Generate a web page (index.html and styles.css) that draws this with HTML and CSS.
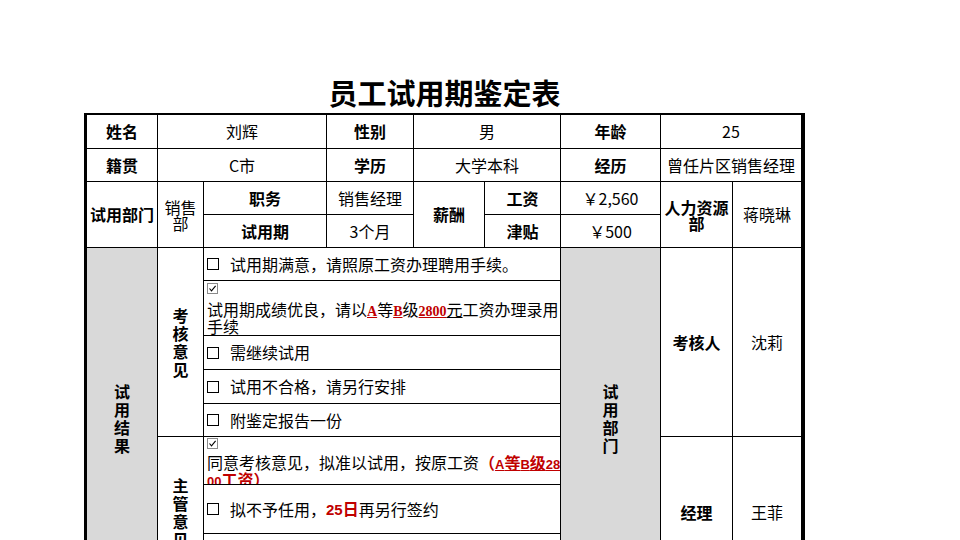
FILE: index.html
```html
<!DOCTYPE html>
<html lang="zh-CN">
<head>
<meta charset="utf-8">
<title>员工试用期鉴定表</title>
<link rel="stylesheet" href="styles.css">
</head>
<body>
<div class="sheet">
  <h1 class="title">员工试用期鉴定表</h1>
  <div class="grid">
    <div class="cell b">姓名</div>
    <div class="cell c2">刘辉</div>
    <div class="cell b">性别</div>
    <div class="cell c2">男</div>
    <div class="cell b">年龄</div>
    <div class="cell c2">25</div>

    <div class="cell b">籍贯</div>
    <div class="cell c2">C市</div>
    <div class="cell b">学历</div>
    <div class="cell c2">大学本科</div>
    <div class="cell b">经历</div>
    <div class="cell c2">曾任片区销售经理</div>

    <div class="cell b r2">试用部门</div>
    <div class="cell r2 narrow">销售部</div>
    <div class="cell b">职务</div>
    <div class="cell">销售经理</div>
    <div class="cell b r2">薪酬</div>
    <div class="cell b">工资</div>
    <div class="cell">￥2,560</div>
    <div class="cell b r2 tight">人力资源部</div>
    <div class="cell r2">蒋晓琳</div>

    <div class="cell b">试用期</div>
    <div class="cell">3个月</div>
    <div class="cell b">津贴</div>
    <div class="cell">￥500</div>

    <div class="cell b gray r8"><span class="vert">试用结果</span></div>
    <div class="cell b r5"><span class="vert">考核意见</span></div>
    <div class="cell opt c4"><span class="box"></span>试用期满意，请照原工资办理聘用手续。</div>
    <div class="cell b gray r8"><span class="vert">试用部门</span></div>
    <div class="cell b r5">考核人</div>
    <div class="cell r5">沈莉</div>

    <div class="cell opt multi first c4">
      <svg class="chk" width="11" height="11" viewBox="0 0 11 11"><rect x="0.5" y="0.5" width="10" height="10" fill="#fff" stroke="#8a8a8a"/><path d="M2.5 5.5 L4.5 7.8 L8.6 2.8" fill="none" stroke="#000" stroke-width="1.1"/></svg>
      <span class="line">试用期成绩优良，请以<span class="hl">A</span>等<span class="hl">B</span>级<span class="hl">2800</span><span class="ul">元</span>工资办理录用</span>
      <span class="line">手续</span>
    </div>
    <div class="cell opt c4"><span class="box"></span>需继续试用</div>
    <div class="cell opt c4"><span class="box"></span>试用不合格，请另行安排</div>
    <div class="cell opt c4"><span class="box"></span>附鉴定报告一份</div>

    <div class="cell b r3"><span class="vert">主管意见</span></div>
    <div class="cell opt multi second c4">
      <svg class="chk" width="11" height="11" viewBox="0 0 11 11"><rect x="0.5" y="0.5" width="10" height="10" fill="#fff" stroke="#8a8a8a"/><path d="M2.5 5.5 L4.5 7.8 L8.6 2.8" fill="none" stroke="#000" stroke-width="1.1"/></svg>
      <span class="line">同意考核意见，拟准以试用，按原工资<span class="red">（<span class="u"><span class="lat">A</span>等<span class="lat">B</span>级<span class="lat">28</span></span></span></span>
      <span class="line"><span class="red"><span class="u"><span class="lat">00</span>工资</span>）</span></span>
    </div>
    <div class="cell b r3">经理</div>
    <div class="cell r3">王菲</div>

    <div class="cell opt c4"><span class="box"></span>拟不予任用，<span class="red"><span class="num">25</span>日</span>再另行签约</div>
    <div class="cell opt c4"></div>
  </div>
</div>
</body>
</html>
```

FILE: styles.css
```css
html, body {
  margin: 0;
  padding: 0;
  background: #fff;
  overflow: hidden;
}

body {
  font-family: "Noto Sans CJK SC", "Liberation Sans", sans-serif;
  font-size: 16px;
  color: #000;
}

.sheet {
  width: 721px;
  margin-left: 84px;
  padding-top: 76px;
}

.title {
  margin: 0;
  height: 37px;
  line-height: 32px;
  font-size: 29px;
  font-weight: 700;
  text-align: center;
  font-family: "Noto Sans CJK SC", sans-serif;
}

.grid {
  display: grid;
  grid-template-columns: 70px 45px 122px 86px 70px 75px 99px 71px 68px;
  grid-template-rows: 33px 32px 32px 32px 32px 54px 33px 33px 32px 47px 48px 53px;
  gap: 1px;
  background: #000;
  padding: 2px 3px 3px 3px;
}

.cell {
  background: #fff;
  display: flex;
  align-items: center;
  justify-content: center;
  text-align: center;
  overflow: hidden;
  line-height: 17px;
  white-space: nowrap;
}

.b { font-weight: 700; }

.gray { background: #d9d9d9; }

.c2 { grid-column: span 2; }
.c4 { grid-column: span 4; }
.r2 { grid-row: span 2; }
.r3 { grid-row: span 3; }
.r5 { grid-row: span 5; }
.r8 { grid-row: span 8; }

.narrow, .tight {
  white-space: normal;
  line-height: 16px;
  padding: 0 4px;
}

.tight { padding: 0 2px; }

.vert {
  display: block;
  width: 1em;
  white-space: normal;
  line-height: 18px;
  word-break: break-all;
}

.opt {
  justify-content: flex-start;
  padding-left: 3px;
  text-align: left;
}

.box {
  display: inline-block;
  width: 10px;
  height: 10px;
  border: 1px solid #000;
  margin-right: 11px;
  flex: none;
}

.multi {
  flex-direction: column;
  align-items: flex-start;
  justify-content: flex-start;
}

.multi .line {
  display: block;
  height: 17px;
  line-height: 17px;
  flex: none;
}

.chk {
  display: block;
  flex: none;
}

.first { padding-top: 2px; }
.first .chk { margin-bottom: 7px; }

.second { padding-top: 1px; }
.second .chk { margin-bottom: 5px; }

.hl {
  color: #c00000;
  font-weight: 700;
  font-size: 14px;
  text-decoration: underline;
  font-family: "Liberation Serif", serif;
}

.ul { text-decoration: underline; }

.red {
  color: #c00000;
  font-weight: 700;
}

.lat {
  font-family: "Liberation Sans", sans-serif;
  font-size: 13px;
}

.num {
  font-family: "Liberation Sans", sans-serif;
  font-size: 15px;
}

.u { text-decoration: underline; }
```
